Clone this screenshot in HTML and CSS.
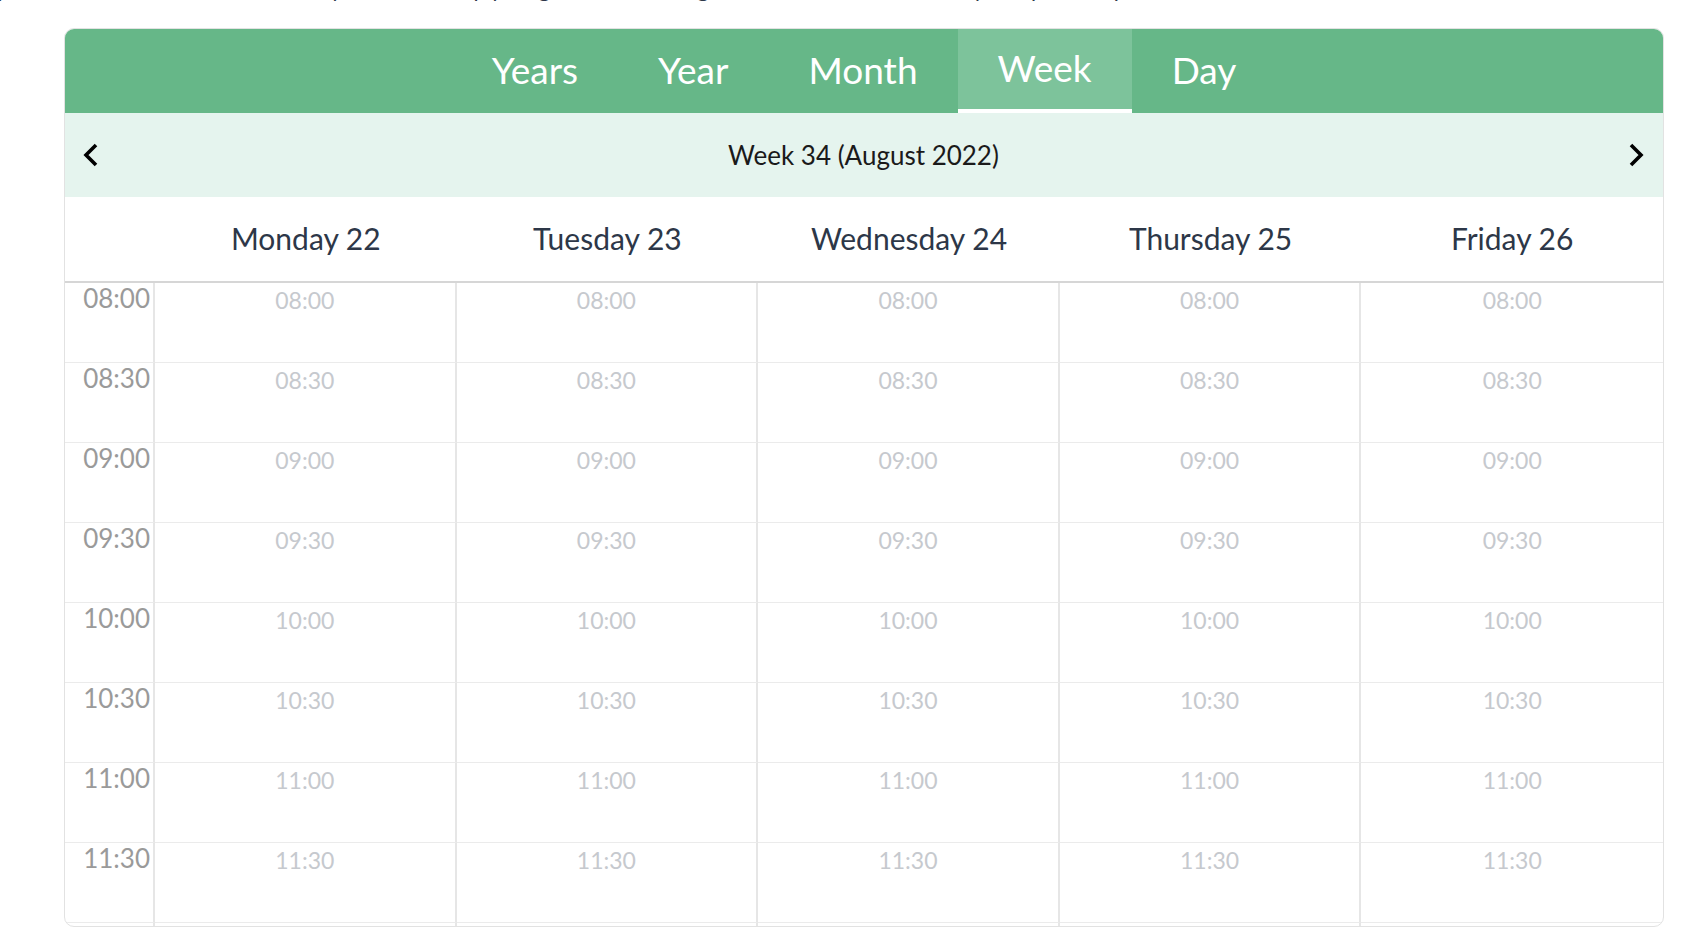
FILE: index.html
```html
<!DOCTYPE html>
<html lang="en">
<head>
<meta charset="utf-8">
<title>Week calendar</title>
<link rel="stylesheet" href="styles.css">
</head>
<body>
<p class="intro">y and events are shown on a weekly calendar; simply drag a block on the grid below to add a new entry and pick its span.</p>
<div class="card">
  <nav class="tabs">
    <div class="tab">Years</div>
    <div class="tab">Year</div>
    <div class="tab">Month</div>
    <div class="tab active">Week</div>
    <div class="tab">Day</div>
  </nav>
  <div class="navbar">
    <span class="arrow"><svg width="16" height="24" viewBox="0 0 16 24"><path d="M13 2 L3 12 L13 22" fill="none" stroke="#000" stroke-width="3.6"/></svg></span>
    <span class="title">Week 34 (August 2022)</span>
    <span class="arrow"><svg width="16" height="24" viewBox="0 0 16 24"><path d="M3 2 L13 12 L3 22" fill="none" stroke="#000" stroke-width="3.6"/></svg></span>
  </div>
  <div class="grid">
    <div class="dh corner"></div>
    <div class="dh">Monday 22</div>
    <div class="dh">Tuesday 23</div>
    <div class="dh">Wednesday 24</div>
    <div class="dh">Thursday 25</div>
    <div class="dh">Friday 26</div>

    <div class="tl">08:00</div><div class="cell">08:00</div><div class="cell">08:00</div><div class="cell">08:00</div><div class="cell">08:00</div><div class="cell">08:00</div>
    <div class="tl">08:30</div><div class="cell">08:30</div><div class="cell">08:30</div><div class="cell">08:30</div><div class="cell">08:30</div><div class="cell">08:30</div>
    <div class="tl">09:00</div><div class="cell">09:00</div><div class="cell">09:00</div><div class="cell">09:00</div><div class="cell">09:00</div><div class="cell">09:00</div>
    <div class="tl">09:30</div><div class="cell">09:30</div><div class="cell">09:30</div><div class="cell">09:30</div><div class="cell">09:30</div><div class="cell">09:30</div>
    <div class="tl">10:00</div><div class="cell">10:00</div><div class="cell">10:00</div><div class="cell">10:00</div><div class="cell">10:00</div><div class="cell">10:00</div>
    <div class="tl">10:30</div><div class="cell">10:30</div><div class="cell">10:30</div><div class="cell">10:30</div><div class="cell">10:30</div><div class="cell">10:30</div>
    <div class="tl">11:00</div><div class="cell">11:00</div><div class="cell">11:00</div><div class="cell">11:00</div><div class="cell">11:00</div><div class="cell">11:00</div>
    <div class="tl">11:30</div><div class="cell">11:30</div><div class="cell">11:30</div><div class="cell">11:30</div><div class="cell">11:30</div><div class="cell">11:30</div>

    <div class="foot tlf"></div><div class="foot"></div><div class="foot"></div><div class="foot"></div><div class="foot"></div><div class="foot"></div>
  </div>
</div>
</body>
</html>
```
FILE: styles.css
```css
* { box-sizing: border-box; }
html, body { margin: 0; padding: 0; background: #fff; }
body {
  font-family: "Lato", "Open Sans", sans-serif;
  overflow: hidden;
  height: 950px;
}
.intro {
  margin: -24px 0 0 -4px;
  font-size: 22px;
  line-height: 26px;
  color: #2d3748;
  white-space: nowrap;
}
.card {
  margin: 26px 0 0 64px;
  width: 1600px;
  border: 1px solid #e2e2e2;
  border-radius: 10px;
  overflow: hidden;
}
.tabs {
  display: flex;
  justify-content: center;
  background: #66b788;
  height: 85px;
  margin: -1px -1px 0 -1px;
}
.tab {
  padding: 0 40px 3px;
  font-size: 37px;
  color: #fff;
  display: flex;
  align-items: center;
  height: 85px;
}
.tab.active {
  background: #7dc39b;
  border-bottom: 4px solid #fff;
  padding-bottom: 3px;
}
.navbar {
  display: flex;
  align-items: center;
  justify-content: space-between;
  background: #e5f4ee;
  height: 84px;
  padding: 0 19px 0 18px;
}
.arrow { display: flex; width: 16px; height: 24px; }
.title {
  font-size: 26px;
  color: #1a1a1a;
}
.grid {
  display: grid;
  grid-template-columns: 90px repeat(5, 1fr);
  grid-template-rows: 86px repeat(8, 80px) 3px;
}
.dh {
  border-bottom: 2px solid #d6d6d6;
  display: flex;
  align-items: center;
  justify-content: center;
  font-size: 30px;
  color: #2d3748;
  padding-bottom: 2px;
}
.tl {
  border-bottom: 1px solid #ebebeb;
  border-right: 2px solid #e6e6e6;
  text-align: right;
  padding: 0 3px 0 0;
  font-size: 26px;
  line-height: 31px;
  color: #9a9a9a;
}
.cell {
  border-bottom: 1px solid #ebebeb;
  border-right: 2px solid #e6e6e6;
  text-align: center;
  padding-top: 3px;
  font-size: 23px;
  line-height: 28px;
  color: #c6c9ce;
}
.cell:nth-child(6n) { border-right: none; }
.foot {
  border-right: 2px solid #e6e6e6;
}
.foot:last-child { border-right: none; }
```
